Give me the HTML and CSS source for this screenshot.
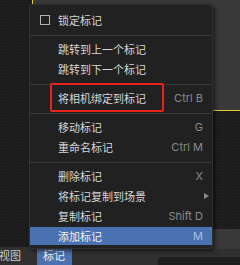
FILE: index.html
```html
<!DOCTYPE html>
<html>
<head>
    <title>标记</title>
    <link rel="stylesheet" href="styles.css">
</head>
<body>
    <div class="screen">
        <div class="canvas">
            <div class="strip strip-top"></div>
            <div class="strip strip-low"></div>

            <div class="menu">
                <div class="item"><span class="icon"><span class="check"></span></span>锁定标记</div>
                <div class="sep"></div>
                <div class="item"><span class="icon"></span>跳转到上一个标记</div>
                <div class="item"><span class="icon"></span>跳转到下一个标记</div>
                <div class="sep"></div>
                <div class="item"><span class="icon"></span>将相机绑定到标记<span class="key">Ctrl B</span></div>
                <div class="sep"></div>
                <div class="item"><span class="icon"></span>移动标记<span class="key">G</span></div>
                <div class="item"><span class="icon"></span>重命名标记<span class="key">Ctrl M</span></div>
                <div class="sep"></div>
                <div class="item"><span class="icon"></span>删除标记<span class="key">X</span></div>
                <div class="item sub"><span class="icon"></span>将标记复制到场景<span class="arrow"></span></div>
                <div class="item"><span class="icon"></span>复制标记<span class="key">Shift D</span></div>
                <div class="item active"><span class="icon"></span>添加标记<span class="key">M</span></div>
            </div>

            <div class="mark-box"></div>
        </div>

        <div class="header">
            <span class="head-item">视图</span>
            <span class="head-item open">标记</span>
            <span class="field"></span>
        </div>
    </div>
</body>
</html>
```

FILE: styles.css
```css
body {
    margin: 0;
    padding: 0;
    background-color: #1c1c1c;
    font-family: "Inter", "Noto Sans CJK SC", sans-serif;
    font-size: 11px;
}
.screen {
    width: 240px;
    height: 265px;
    overflow: hidden;
    display: flex;
    flex-direction: column;
}
.canvas {
    position: relative;
    height: 247px;
    background-color: #1c1c1c;
    background-image: radial-gradient(#242424 0.6px, transparent 0.8px);
    background-size: 3px 3px;
}
.strip {
    position: absolute;
    background-color: #393939;
}
.strip-top {
    left: 32px;
    top: -2px;
    right: -5px;
    height: 111px;
    border: 1px solid #e2cf3a;
}
.strip-low {
    left: 150px;
    top: 229px;
    right: -5px;
    bottom: -2px;
}
.menu {
    position: absolute;
    left: 29px;
    top: 4px;
    width: 184px;
    box-sizing: border-box;
    padding: 5px 0 2px 0;
    background-color: #212121;
    border: 1px solid #2f2f2f;
    border-left-color: #353535;
    border-radius: 4px;
    box-shadow: 2px 2px 4px rgba(0,0,0,0.55);
}
.item {
    display: flex;
    align-items: center;
    height: 20px;
    padding: 0 9px 0 10px;
    color: #d6d6d6;
    white-space: nowrap;
}
.icon {
    width: 18px;
    flex: none;
    display: flex;
    align-items: center;
}
.check {
    width: 8px;
    height: 8px;
    border: 1px solid #b4b4b4;
}
.key {
    margin-left: auto;
    color: #8a8a8a;
}
.item.sub {
    padding-right: 3px;
}
.arrow {
    margin-left: auto;
    width: 0;
    height: 0;
    border-top: 3px solid transparent;
    border-bottom: 3px solid transparent;
    border-left: 5px solid #8a8a8a;
}
.item.active {
    height: 18px;
    margin: 1px 0;
    background-color: #4a72b0;
    color: #f2f2f2;
}
.item.active .key {
    color: #a9bfe0;
}
.sep {
    height: 1px;
    margin: 5px 0 3px 0;
    background-color: #373737;
}
.mark-box {
    position: absolute;
    left: 50px;
    top: 83px;
    width: 114px;
    height: 29px;
    box-sizing: border-box;
    border: 2px solid #e8231a;
    border-radius: 2px;
}
.header {
    display: flex;
    height: 18px;
    background-color: #303030;
}
.head-item {
    line-height: 18px;
    color: #cfcfcf;
    padding: 0 7px 0 6px;
}
.head-item:first-child {
    margin-left: -7px;
    margin-right: 9px;
}
.head-item.open {
    background-color: #4a72b0;
    color: #f2f2f2;
    border-radius: 2px 2px 0 0;
}
.field {
    margin-left: auto;
    align-self: flex-end;
    width: 82px;
    height: 8px;
    background-color: #1d1d1d;
    border-radius: 4px 0 0 0;
}
```
